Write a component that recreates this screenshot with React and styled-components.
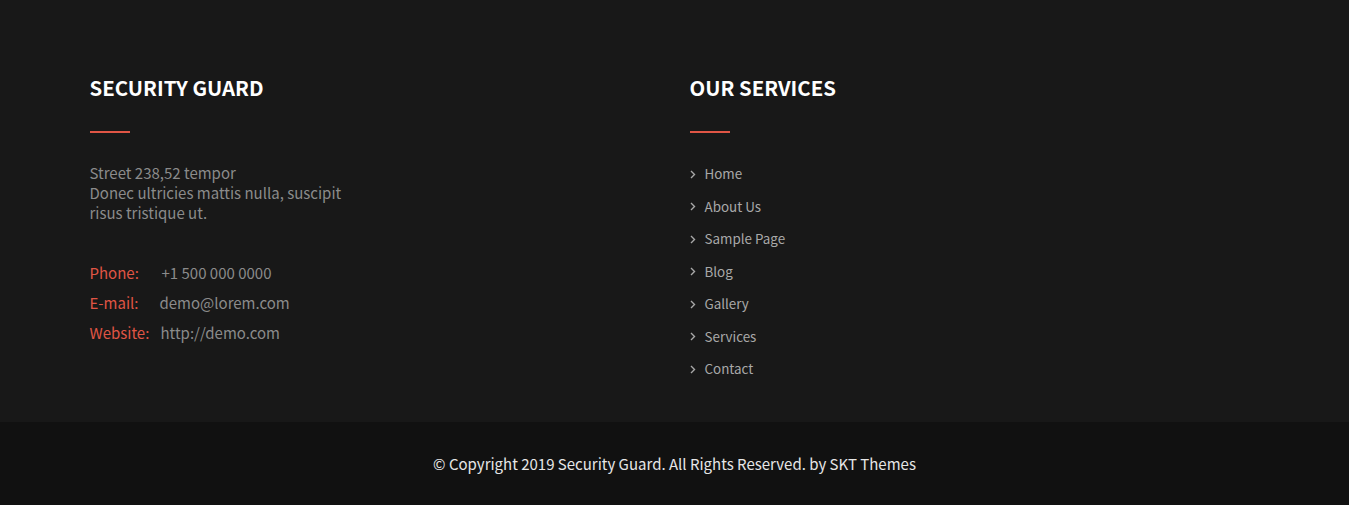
import React from "react";
import styled, { createGlobalStyle } from "styled-components";

const Global = createGlobalStyle`
  html, body { margin: 0; padding: 0; background: #181818; }
  body { font-family: "Noto Sans CJK SC", "Noto Sans", sans-serif; }
  * { box-sizing: border-box; }
`;

const Footer = styled.footer`
  background: #181818;
`;

const Main = styled.div`
  height: 422px;
  padding-top: 72px;
`;

const Container = styled.div`
  width: 1170px;
  margin: 0 auto;
  display: grid;
  grid-template-columns: 600px 570px;
`;

const Column = styled.div`
  display: flex;
  flex-direction: column;
`;

const Heading = styled.h3`
  margin: 0;
  color: #ffffff;
  font-size: 20.4px;
  font-weight: 700;
  line-height: 30px;
`;

const Rule = styled.div`
  width: 40px;
  height: 2px;
  background: #e05545;
  margin-top: 29px;
  margin-bottom: 30px;
`;

const Address = styled.p`
  margin: 0;
  color: #8b8b8b;
  font-size: 15px;
  line-height: 20px;
  width: 270px;
`;

const ContactList = styled.div`
  margin-top: 35px;
  display: flex;
  flex-direction: column;
`;

const ContactRow = styled.div`
  display: flex;
  font-size: 15px;
  line-height: 30px;
`;

const Label = styled.span`
  color: #e05545;
  min-width: ${(p) => p.$w || 70}px;
  padding-right: 10px;
`;

const Value = styled.span`
  color: #8b8b8b;
`;

const LinkList = styled.ul`
  list-style: none;
  margin: 0;
  padding: 0;
  margin-top: -6px;
`;

const LinkItem = styled.li`
  display: flex;
  align-items: center;
  height: 32.5px;
  color: #a8a8a8;
  font-size: 13.4px;
`;

const Chevron = styled.svg`
  width: 6px;
  height: 9px;
  margin-right: 9px;
  margin-top: 2px;
  flex: none;
`;

const Bottom = styled.div`
  background: #111111;
  height: 83px;
  display: flex;
  align-items: center;
  justify-content: center;
  color: #e6e6e6;
  font-size: 15px;
  padding-bottom: 1px;
`;

const links = ["Home", "About Us", "Sample Page", "Blog", "Gallery", "Services", "Contact"];

export default function App() {
  return (
    <Footer>
      <Global />
      <Main>
        <Container>
          <Column>
            <Heading>SECURITY GUARD</Heading>
            <Rule />
            <Address>
              Street 238,52 tempor
              <br />
              Donec ultricies mattis nulla, suscipit risus tristique ut.
            </Address>
            <ContactList>
              <ContactRow>
                <Label $w={72}>Phone:</Label>
                <Value>+1 500 000 0000</Value>
              </ContactRow>
              <ContactRow>
                <Label $w={70}>E-mail:</Label>
                <Value>demo@lorem.com</Value>
              </ContactRow>
              <ContactRow>
                <Label $w={71}>Website:</Label>
                <Value>http://demo.com</Value>
              </ContactRow>
            </ContactList>
          </Column>
          <Column>
            <Heading>OUR SERVICES</Heading>
            <Rule />
            <LinkList>
              {links.map((l) => (
                <LinkItem key={l}>
                  <Chevron viewBox="0 0 6 9">
                    <path d="M1 1 L4.5 4.5 L1 8" fill="none" stroke="#a8a8a8" strokeWidth="1.4" />
                  </Chevron>
                  {l}
                </LinkItem>
              ))}
            </LinkList>
          </Column>
        </Container>
      </Main>
      <Bottom>© Copyright 2019 Security Guard. All Rights Reserved. by SKT Themes</Bottom>
    </Footer>
  );
}
